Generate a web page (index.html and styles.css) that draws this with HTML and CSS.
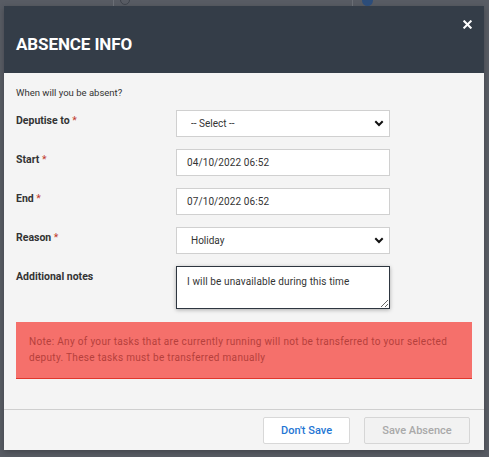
FILE: index.html
```html
<!DOCTYPE html>
<html>
<head>
<meta charset="utf-8">
<link rel="stylesheet" href="styles.css">
</head>
<body>
<div class="backdrop">
  <div class="bg-line bg-line-a"></div>
  <div class="bg-line bg-line-b"></div>
  <div class="bg-circle"></div>
  <div class="bg-info"></div>
  <div class="modal">
    <div class="modal-header">
      <h1 class="title">ABSENCE INFO</h1>
      <button class="close" aria-label="Close">
        <svg width="9" height="9" viewBox="0 0 9 9"><path d="M1.3 1.3 L7.7 7.7 M7.7 1.3 L1.3 7.7" stroke="#fff" stroke-width="2" stroke-linecap="square"/></svg>
      </button>
    </div>
    <div class="modal-body">
      <p class="intro">When will you be absent?</p>
      <div class="form">
        <label class="label">Deputise to <span class="req">*</span></label>
        <div class="select-wrap">
          <select class="control select"><option>-- Select --</option></select>
        </div>
        <label class="label">Start <span class="req">*</span></label>
        <input class="control input" value="04/10/2022 06:52">
        <label class="label">End <span class="req">*</span></label>
        <input class="control input" value="07/10/2022 06:52">
        <label class="label">Reason <span class="req">*</span></label>
        <div class="select-wrap">
          <select class="control select"><option>Holiday</option></select>
        </div>
        <label class="label">Additional notes</label>
        <textarea class="control textarea">I will be unavailable during this time</textarea>
      </div>
      <div class="note">Note: Any of your tasks that are currently running will not be transferred to your selected deputy. These tasks must be transferred manually</div>
    </div>
    <div class="modal-footer">
      <button class="btn btn-secondary">Don't Save</button>
      <button class="btn btn-disabled" disabled>Save Absence</button>
    </div>
  </div>
</div>
</body>
</html>
```
FILE: styles.css
```css
* { box-sizing: border-box; }
html, body { margin: 0; padding: 0; }
body {
  width: 489px;
  height: 457px;
  overflow: hidden;
  background: #585c64;
  font-family: Roboto, "Liberation Sans", sans-serif;
}
.backdrop {
  position: relative;
  width: 489px;
  height: 457px;
  padding: 6px 5px 0 4px;
}
.bg-line {
  position: absolute;
  top: 0;
  width: 1px;
  height: 6px;
  background: #6a6e75;
}
.bg-line-a { left: 113px; }
.bg-line-b { left: 352px; }
.bg-circle {
  position: absolute;
  left: 120px;
  top: -5px;
  width: 10px;
  height: 10px;
  border: 1.5px solid #3e434b;
  border-radius: 50%;
}
.bg-info {
  position: absolute;
  left: 362px;
  top: -5px;
  width: 11px;
  height: 11px;
  border-radius: 50%;
  background: #2c4d7a;
}
.modal {
  width: 480px;
  height: 444px;
  background: #f4f4f4;
  display: flex;
  flex-direction: column;
  box-shadow: 0 2px 6px rgba(0,0,0,0.25);
}
.modal-header {
  position: relative;
  height: 67px;
  background: #343d48;
  display: flex;
  align-items: flex-end;
  padding: 0 12px 20px;
}
.title {
  margin: 0;
  color: #fff;
  font-size: 17px;
  font-weight: 700;
  line-height: 18px;
  letter-spacing: -0.1px;
}
.close {
  position: absolute;
  top: 14px;
  right: 12px;
  padding: 0;
  border: 0;
  background: none;
  width: 9px;
  height: 9px;
  display: flex;
}
.modal-body {
  flex: 1;
  padding: 14px 12px 0;
}
.intro {
  margin: 0 0 11px;
  font-size: 9.5px;
  line-height: 12px;
  color: #333;
}
.form {
  display: grid;
  grid-template-columns: 160px 214px;
  row-gap: 12px;
}
.label {
  padding-top: 5px;
  font-size: 10.5px;
  font-weight: 700;
  color: #333;
  line-height: 12px;
}
.req { color: #c0392b; font-weight: 400; }
.control {
  width: 214px;
  height: 27px;
  margin: 0;
  background: #fff;
  border: 1px solid #d0d0d0;
  border-radius: 0;
  font-family: Roboto, "Liberation Sans", sans-serif;
  font-size: 10px;
  color: #333;
  outline: none;
}
.input { padding: 0 10px; letter-spacing: 0.1px; }
.select-wrap { position: relative; }
.select {
  appearance: none;
  -webkit-appearance: none;
  padding: 0 14px;
  background-image: url("data:image/svg+xml,%3Csvg xmlns='http://www.w3.org/2000/svg' width='10' height='7' viewBox='0 0 10 7'%3E%3Cpath d='M1.3 1.3 L5 5 L8.7 1.3' fill='none' stroke='%23111' stroke-width='2'/%3E%3C/svg%3E");
  background-repeat: no-repeat;
  background-position: right 5px center;
}
.textarea {
  height: 43px;
  padding: 8px 10px 4px;
  border: 1px solid #2e3640;
  box-shadow: 0 1px 4px rgba(0,0,0,0.3);
  resize: vertical;
  line-height: 14px;
  letter-spacing: 0.12px;
}
.note {
  margin-top: 13px;
  background: #f5706b;
  border-bottom: 1px solid #e0362c;
  padding: 12px 13px;
  font-size: 10px;
  line-height: 16px;
  color: #b5403c;
  letter-spacing: 0.32px;
}
.modal-footer {
  height: 41px;
  border-top: 1px solid #cfcfcf;
  display: flex;
  justify-content: flex-end;
  align-items: center;
  gap: 14px;
  padding: 0 14px;
}
.btn {
  height: 27px;
  border-radius: 2px;
  font-family: Roboto, "Liberation Sans", sans-serif;
  font-size: 11px;
  font-weight: 500;
  padding: 0;
}
.btn-secondary {
  width: 87px;
  background: #fff;
  border: 1px solid #d8d8d8;
  color: #1f76d4;
}
.btn-disabled {
  width: 106px;
  background: #f2f2f2;
  border: 1px solid #d6d6d6;
  color: #a9a9a9;
}
```
